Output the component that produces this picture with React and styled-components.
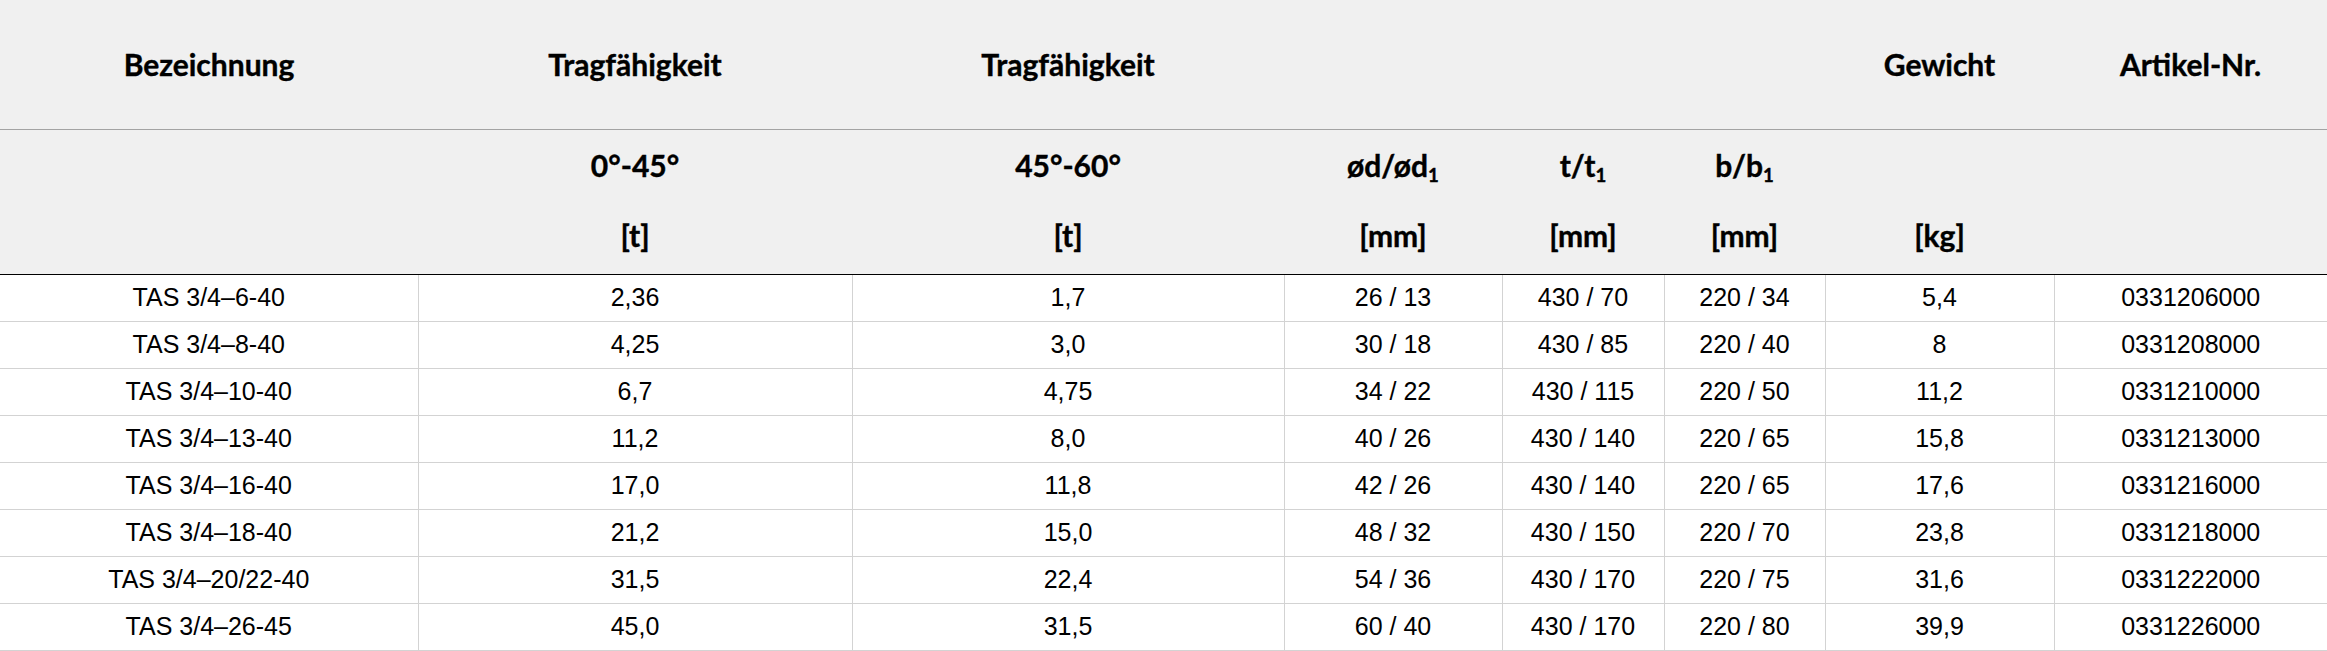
import React from 'react'
import styled, { createGlobalStyle } from 'styled-components'

const GlobalStyle = createGlobalStyle`
  html, body {
    margin: 0;
    padding: 0;
    background: #ffffff;
  }
`

const columns = [418, 434, 432, 218, 162, 161, 229, 273]

const rows = [
  ['TAS 3/4–6-40', '2,36', '1,7', '26 / 13', '430 / 70', '220 / 34', '5,4', '0331206000'],
  ['TAS 3/4–8-40', '4,25', '3,0', '30 / 18', '430 / 85', '220 / 40', '8', '0331208000'],
  ['TAS 3/4–10-40', '6,7', '4,75', '34 / 22', '430 / 115', '220 / 50', '11,2', '0331210000'],
  ['TAS 3/4–13-40', '11,2', '8,0', '40 / 26', '430 / 140', '220 / 65', '15,8', '0331213000'],
  ['TAS 3/4–16-40', '17,0', '11,8', '42 / 26', '430 / 140', '220 / 65', '17,6', '0331216000'],
  ['TAS 3/4–18-40', '21,2', '15,0', '48 / 32', '430 / 150', '220 / 70', '23,8', '0331218000'],
  ['TAS 3/4–20/22-40', '31,5', '22,4', '54 / 36', '430 / 170', '220 / 75', '31,6', '0331222000'],
  ['TAS 3/4–26-45', '45,0', '31,5', '60 / 40', '430 / 170', '220 / 80', '39,9', '0331226000'],
]

const Sub = ({ children }) => <Index>{children}</Index>

const subHeads = [
  [null, null],
  ['0°-45°', '[t]'],
  ['45°-60°', '[t]'],
  [<>ød/ød<Sub>1</Sub></>, '[mm]'],
  [<>t/t<Sub>1</Sub></>, '[mm]'],
  [<>b/b<Sub>1</Sub></>, '[mm]'],
  [null, '[kg]'],
  [null, null],
]

const topHeads = ['Bezeichnung', 'Tragfähigkeit', 'Tragfähigkeit', '', '', '', 'Gewicht', 'Artikel-Nr.']

export default function App() {
  return (
    <>
      <GlobalStyle />
      <Table>
        <colgroup>
          {columns.map((w, i) => <col key={i} style={{ width: w }} />)}
        </colgroup>
        <thead>
          <TopRow>
            {topHeads.map((h, i) => <HeadCell key={i}>{h}</HeadCell>)}
          </TopRow>
          <UnitRow>
            {subHeads.map(([a, b], i) => (
              <HeadCell key={i}>
                <Stack>
                  <Line>{a}</Line>
                  <Line>{b}</Line>
                </Stack>
              </HeadCell>
            ))}
          </UnitRow>
        </thead>
        <tbody>
          {rows.map((r, i) => (
            <DataRow key={i}>
              {r.map((v, j) => <Cell key={j} $first={j === 0}>{v}</Cell>)}
            </DataRow>
          ))}
        </tbody>
      </Table>
    </>
  )
}

const Table = styled.table`
  width: 2327px;
  table-layout: fixed;
  border-collapse: collapse;
  border-spacing: 0;
  color: #000;
`

const HeadCell = styled.th`
  background: #f0f0f0;
  padding: 0;
  text-align: center;
  vertical-align: middle;
  font-family: Lato, "Open Sans", sans-serif;
  font-weight: 700;
  font-size: 30px;
  white-space: nowrap;
  -webkit-text-stroke: 0.4px #000;
`

const TopRow = styled.tr`
  height: 129px;
  th {
    border-bottom: 1px solid #a3a3a3;
  }
`

const UnitRow = styled.tr`
  height: 143px;
  th {
    border-bottom: 1px solid #000;
  }
`

const Stack = styled.div`
  display: flex;
  flex-direction: column;
  padding-bottom: 4px;
`

const Line = styled.div`
  height: 70px;
  line-height: 70px;
`

const Index = styled.sub`
  font-size: 0.62em;
  vertical-align: -0.25em;
  line-height: 0;
`

const DataRow = styled.tr`
  height: 46px;
`

const Cell = styled.td`
  padding: 0;
  height: 46px;
  text-align: center;
  vertical-align: middle;
  font-family: "Liberation Sans", Arial, sans-serif;
  font-size: 25px;
  border-bottom: 1px solid #d3d3d3;
  border-left: ${p => (p.$first ? 'none' : '1px solid #d3d3d3')};
  white-space: nowrap;
`
